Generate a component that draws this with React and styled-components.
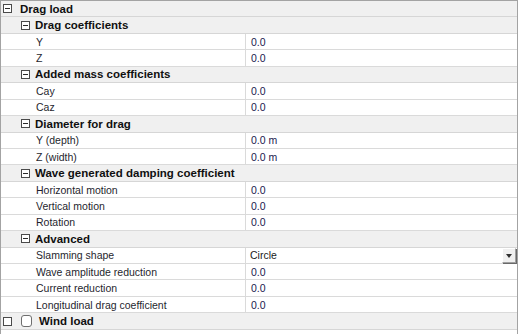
import React from 'react'
import styled, { createGlobalStyle } from 'styled-components'

const GlobalStyle = createGlobalStyle`
  html, body {
    margin: 0;
    padding: 0;
    background: #ffffff;
    overflow: hidden;
  }
  body {
    font-family: "Liberation Sans", Arial, sans-serif;
  }
`

const ROW_H = '16.45px'

const sections = [
  {
    title: 'Drag coefficients',
    rows: [['Y', '0.0'], ['Z', '0.0']]
  },
  {
    title: 'Added mass coefficients',
    rows: [['Cay', '0.0'], ['Caz', '0.0']]
  },
  {
    title: 'Diameter for drag',
    rows: [['Y (depth)', '0.0 m'], ['Z (width)', '0.0 m']]
  },
  {
    title: 'Wave generated damping coefficient',
    rows: [['Horizontal motion', '0.0'], ['Vertical motion', '0.0'], ['Rotation', '0.0']]
  },
  {
    title: 'Advanced',
    rows: [
      ['Slamming shape', 'Circle', true],
      ['Wave amplitude reduction', '0.0'],
      ['Current reduction', '0.0'],
      ['Longitudinal drag coefficient', '0.0']
    ]
  }
]

const Panel = styled.div`
  width: 518px;
  height: 340px;
  box-sizing: border-box;
  border: 1px solid #a3a3a3;
  border-bottom: none;
  background: #ffffff;
`

const CategoryRow = styled.div`
  height: ${ROW_H};
  box-sizing: border-box;
  display: flex;
  align-items: center;
  background: #f0f0f0;
  border-bottom: 1px solid #d6d6d6;
  padding-left: ${p => (p.$level === 0 ? 2 : 20)}px;
  font-size: 11.5px;
  font-weight: bold;
  color: #101010;
`

const Expander = styled.span`
  width: 9px;
  height: 9px;
  box-sizing: border-box;
  border: 1px solid #4a4a4a;
  background: #ffffff;
  display: flex;
  align-items: center;
  justify-content: center;
  flex-shrink: 0;
  margin-right: ${p => p.$gap}px;

  &::after {
    content: '';
    display: ${p => (p.$open ? 'block' : 'none')};
    width: 5px;
    height: 1px;
    background: #2a2a2a;
  }
`

const Check = styled.span`
  width: 11px;
  height: 12px;
  box-sizing: border-box;
  border: 1px solid #6e6e6e;
  border-radius: 3px;
  background: #ffffff;
  margin-right: 7px;
  flex-shrink: 0;
`

const PropRow = styled.div`
  height: ${ROW_H};
  box-sizing: border-box;
  display: grid;
  grid-template-columns: 244px 1fr;
  border-bottom: 1px solid #dadada;
  font-size: 10.5px;
  background: #ffffff;
`

const Label = styled.div`
  display: flex;
  align-items: center;
  padding-left: 35px;
  color: #1f1f2e;
  white-space: nowrap;
`

const Value = styled.div`
  position: relative;
  display: flex;
  align-items: center;
  border-left: 1px solid #dadada;
  padding-left: ${p => (p.$combo ? 4 : 5)}px;
  color: ${p => (p.$combo ? '#1a1a1a' : '#1a1a4e')};
  white-space: nowrap;
`

const DropButton = styled.span`
  position: absolute;
  right: 1px;
  top: 0;
  width: 14px;
  height: 15px;
  box-sizing: border-box;
  background: #f0f0f0;
  border-top: 1px solid #ffffff;
  border-left: 1px solid #ffffff;
  border-right: 1px solid #a0a0a0;
  border-bottom: 1px solid #a0a0a0;
  box-shadow: 1px 1px 0 #696969;
  display: flex;
  align-items: center;
  justify-content: center;

  &::after {
    content: '';
    width: 0;
    height: 0;
    margin-top: 1px;
    border-left: 3.5px solid transparent;
    border-right: 3.5px solid transparent;
    border-top: 4px solid #303030;
  }
`

const Section = ({ title, rows }) => (
  <>
    <CategoryRow $level={1}>
      <Expander $open $gap={5} />
      {title}
    </CategoryRow>
    {rows.map(([label, value, combo]) => (
      <PropRow key={label}>
        <Label>{label}</Label>
        <Value $combo={combo}>
          {value}
          {combo && <DropButton />}
        </Value>
      </PropRow>
    ))}
  </>
)

export default function App() {
  return (
    <>
      <GlobalStyle />
      <Panel>
        <CategoryRow $level={0}>
          <Expander $open $gap={8} />
          Drag load
        </CategoryRow>
        {sections.map(s => (
          <Section key={s.title} {...s} />
        ))}
        <CategoryRow $level={0}>
          <Expander $gap={9} />
          <Check />
          Wind load
        </CategoryRow>
      </Panel>
    </>
  )
}
